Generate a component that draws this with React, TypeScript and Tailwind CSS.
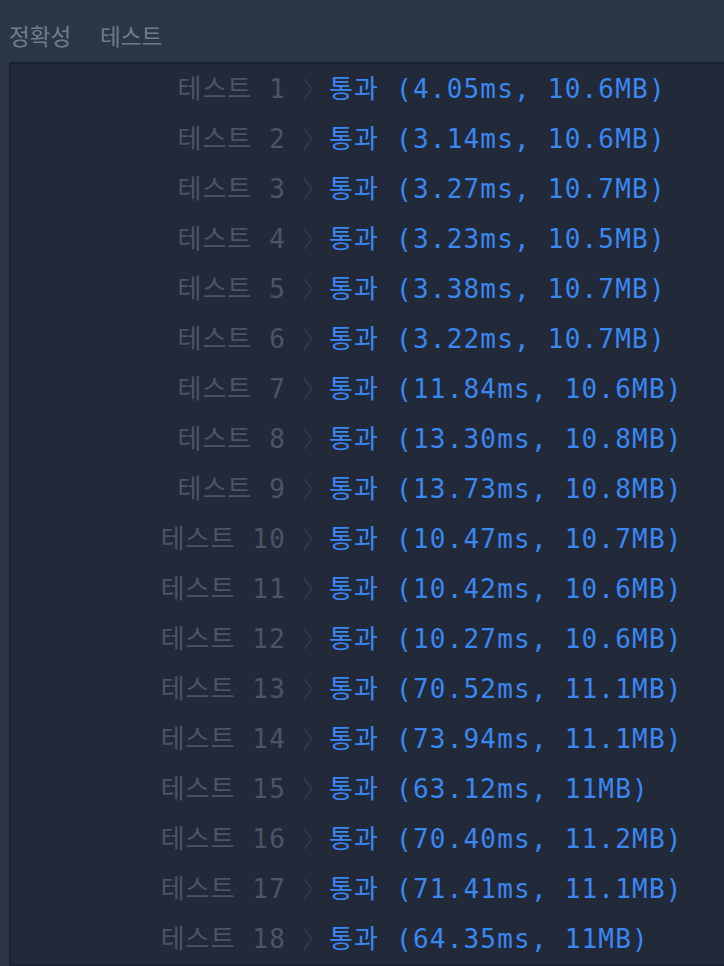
const results: [number, string][] = [
  [1, '(4.05ms, 10.6MB)'],
  [2, '(3.14ms, 10.6MB)'],
  [3, '(3.27ms, 10.7MB)'],
  [4, '(3.23ms, 10.5MB)'],
  [5, '(3.38ms, 10.7MB)'],
  [6, '(3.22ms, 10.7MB)'],
  [7, '(11.84ms, 10.6MB)'],
  [8, '(13.30ms, 10.8MB)'],
  [9, '(13.73ms, 10.8MB)'],
  [10, '(10.47ms, 10.7MB)'],
  [11, '(10.42ms, 10.6MB)'],
  [12, '(10.27ms, 10.6MB)'],
  [13, '(70.52ms, 11.1MB)'],
  [14, '(73.94ms, 11.1MB)'],
  [15, '(63.12ms, 11MB)'],
  [16, '(70.40ms, 11.2MB)'],
  [17, '(71.41ms, 11.1MB)'],
  [18, '(64.35ms, 11MB)'],
];

function Chevron() {
  return (
    <svg width="12" height="24" viewBox="0 0 12 24" className="shrink-0 text-[#323d4d]">
      <path d="M2 2 L10 12 L2 22" fill="none" stroke="currentColor" strokeWidth="1.6" strokeLinecap="round" strokeLinejoin="round" />
    </svg>
  );
}

export default function App() {
  return (
    <div className="h-[966px] w-[724px] overflow-hidden bg-[#2b3647]">
      <div className="flex h-[62px] items-center gap-[29px] pl-[9px] pt-[10px] font-['Noto_Sans_CJK_KR',sans-serif] text-[22.5px] text-[#6e7d8e]">
        <span>정확성</span>
        <span>테스트</span>
      </div>
      <div className="ml-[9px] w-[730px] border-y-2 border-l-2 border-[#1b2332] bg-[#222a3a] font-['DejaVu_Sans_Mono','Noto_Sans_CJK_KR',monospace] text-[26px] tracking-[1.2px]">
        {results.map(([n, r]) => (
          <div key={n} className="flex h-[50px] items-center">
            <span className="w-[275px] whitespace-pre text-right text-[#4a5567]">
              <span className="tracking-[1px]">테스트</span> {n}
            </span>
            <span className="ml-[16px] mr-[15px] flex items-center">
              <Chevron />
            </span>
            <span className="whitespace-pre text-[#3a87f2]">통과 {r}</span>
          </div>
        ))}
      </div>
    </div>
  );
}
